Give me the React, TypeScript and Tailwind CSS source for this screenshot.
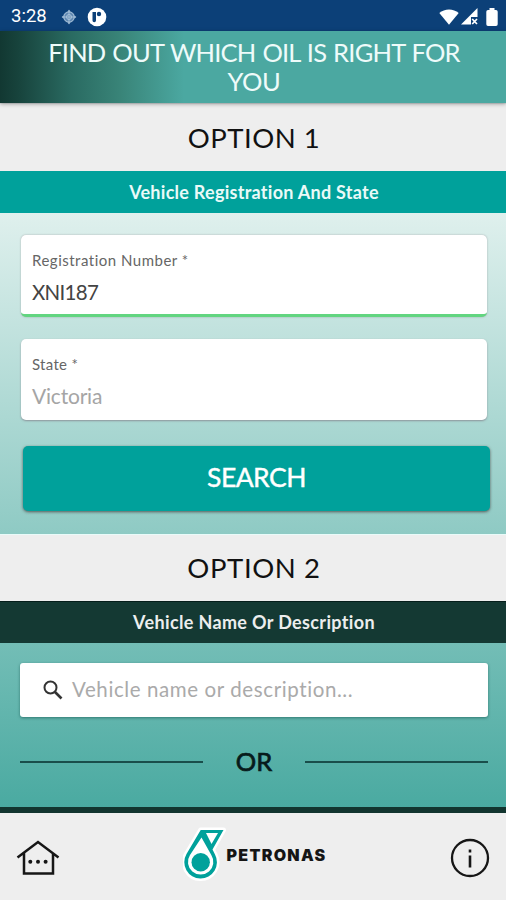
import React from "react";

function StatusBar() {
  return (
    <div className="flex h-[31px] items-center justify-between bg-[#0c4078] pt-[2px] pl-[11px] pr-[8px] text-white">
      <div className="flex items-center">
        <span className="w-[35px] font-['Roboto',sans-serif] text-[18.5px] leading-none">3:28</span>
        <svg className="ml-[15px]" width="16" height="16" viewBox="0 0 16 16" fill="none">
          <path d="M8 .5 11 5l4.500 3-4.500 3L8 15.500 5 11 .5 8 5 5Z" fill="#7c9fc2" />
          <circle cx="8" cy="8" r="5.200" fill="#5d86b0" stroke="#9db9d3" strokeWidth="1.200" />
          <circle cx="8" cy="8" r="2.500" stroke="#a9c3da" />
          <path d="M8 1v14M1 8h14" stroke="#a9c3da" strokeWidth=".9" />
        </svg>
        <svg className="ml-[10px]" width="20" height="20" viewBox="0 0 20 20">
          <circle cx="10" cy="10" r="9.300" fill="#fff" />
          <path d="M5.500 5H9v8.500a1.700 1.700 0 0 1-3.500 0Z" fill="#0c4078" />
          <circle cx="12" cy="7" r="2.200" fill="#0c4078" />
        </svg>
      </div>
      <div className="flex items-center">
        <svg width="20" height="16" viewBox="0 0 20 16">
          <path d="M.3 4C5.500-.8 14.500-.8 19.700 4L10 15.700Z" fill="#fff" />
        </svg>
        <svg className="ml-[2px]" width="17" height="17" viewBox="0 0 17 17">
          <path d="M16.500 0v9H10v7.500H0Z" fill="#fff" />
          <path d="m11.200 11 4.800 5m0-5-4.800 5" stroke="#fff" strokeWidth="1.700" />
        </svg>
        <svg className="ml-[8px]" width="12" height="18" viewBox="0 0 12 18">
          <path d="M3.500 0h5v2H10a1.700 1.700 0 0 1 1.700 1.700v12.600A1.700 1.700 0 0 1 10 18H2a1.700 1.700 0 0 1-1.700-1.700V3.700A1.700 1.700 0 0 1 2 2h1.500Z" fill="#fff" />
        </svg>
      </div>
    </div>
  );
}

function OptionTitle({ children }: { children: React.ReactNode }) {
  return (
    <h2 className="flex h-[67px] items-center justify-center bg-[#eeeeee] pl-[2px] text-[27.5px] leading-none tracking-[0.5px] text-[#111]">
      {children}
    </h2>
  );
}

function PetronasLogo() {
  return (
    <div className="mt-[14px] flex items-center">
      <svg width="44" height="56" viewBox="0 0 44 56">
        <path
          d="M17.700 3H40.500L29.500 22.500 32 27.500A16.300 16.300 0 1 1 3.500 27Z"
          fill="#00a19b"
          stroke="#fff"
          strokeWidth="5"
          strokeLinejoin="round"
        />
        <path d="M17.700 3H40.500L29.500 22.500 32 27.500A16.300 16.300 0 1 1 3.500 27Z" fill="#00a19b" />
        <path d="M23 6H35L28.500 17Z" fill="#fff" />
        <path d="M18.500 10.500 28.300 28A12.700 12.700 0 1 1 7 28Z" fill="#fff" />
        <circle cx="17.700" cy="35.300" r="9.200" fill="#00a19b" />
      </svg>
      <span className="ml-[-1px] font-['Inter',sans-serif] text-[16px] leading-none font-black tracking-[1.3px] text-[#151515]">PETRONAS</span>
    </div>
  );
}

export default function App() {
  return (
    <div className="flex h-[900px] w-[506px] flex-col overflow-hidden font-['Lato',sans-serif]">
      <StatusBar />
      <header className="z-10 flex h-[72px] flex-col items-center bg-[linear-gradient(90deg,#123832_0px,#17433c_18px,#2a6b62_72px,#398478_120px,#4ba8a1_184px,#4ba8a1_100%)] pt-[7px] pl-[2px] text-center text-[25.5px] leading-[29px] text-[#eefbfa] shadow-[0_1px_4px_rgba(0,0,0,0.35)]">
        <div className="whitespace-nowrap tracking-[-0.8px] [word-spacing:1.2px]">FIND OUT WHICH OIL IS RIGHT FOR</div>
        <div className="tracking-[-0.4px]">YOU</div>
      </header>
      <div className="h-px bg-[#dcdfe0]" />
      <OptionTitle>OPTION 1</OptionTitle>
      <div className="flex h-[42px] items-center justify-center bg-[#00a19b] pl-[2px] text-[18px] leading-none font-bold tracking-[0.27px] text-[#eafaf8]">
        Vehicle Registration And State
      </div>
      <main className="flex h-[594px] flex-col bg-[linear-gradient(180deg,#dff0ed,#4aaaa1)]">
        <section className="flex h-[321px] flex-col pt-[22px]">
          <div className="mr-[19px] ml-[21px] flex h-[82px] flex-col rounded-[5px] border-b-[3px] border-[#62d580] bg-white pl-[11px] shadow-[0_0_2px_rgba(90,70,80,0.4)]">
            <label className="mt-[16px] text-[15px] leading-[18px] tracking-[0.5px] text-[#666]">Registration Number *</label>
            <span className="mt-[10px] text-[20.5px] leading-[26px] tracking-[-0.7px] text-[#444]">XNI187</span>
          </div>
          <div className="mt-[22px] mr-[19px] ml-[21px] flex h-[81px] flex-col rounded-[5px] bg-white pl-[11px] shadow-[0_1px_2px_rgba(110,80,100,0.5)]">
            <label className="mt-[16px] text-[15px] leading-[18px] tracking-[0.3px] text-[#666]">State *</label>
            <span className="mt-[10px] text-[21px] leading-[26px] tracking-[-0.2px] text-[#a5a5a5]">Victoria</span>
          </div>
          <button className="mt-[26px] ml-[23px] h-[65px] w-[467px] rounded-[5px] bg-[#00a19b] pb-[3px] text-[26.5px] leading-none tracking-[-0.5px] text-white shadow-[0_1px_3px_rgba(60,40,40,0.7)] [-webkit-text-stroke:0.4px_white]">
            SEARCH
          </button>
        </section>
        <div className="h-[67px] border-t border-[#e9fbf9] bg-[#eeeeee]">
          <h2 className="flex h-[66px] items-center justify-center pl-[2px] text-[27.5px] leading-none tracking-[0.6px] text-[#111]">
            OPTION 2
          </h2>
        </div>
        <div className="z-10 flex h-[42px] items-center justify-center border-t border-[#061e1b] bg-[#143933] pb-[2px] pl-[2px] text-[18px] leading-none font-bold tracking-[0.35px] text-[#eceeee]">
          Vehicle Name Or Description
        </div>
        <section className="px-[20px] pt-[20px]">
          <div className="mr-[-2px] flex h-[54px] items-center rounded-[3px] bg-white pl-[22px] shadow-[0_1px_3px_rgba(20,80,75,0.6)]">
            <svg width="22" height="22" viewBox="0 0 22 22" fill="none" stroke="#333">
              <circle cx="8.500" cy="8.500" r="6" strokeWidth="2" />
              <path d="m13 13 6.500 6.500" strokeWidth="2.600" />
            </svg>
            <span className="ml-[8px] pb-[2px] text-[20.5px] leading-none tracking-[0.6px] text-[#aaa]">Vehicle name or description...</span>
          </div>
          <div className="mr-[-2px] flex h-[90px] items-center">
            <div className="h-[2px] w-[183px] bg-[#194e4b]" />
            <div className="flex w-[102px] justify-center text-[25.5px] leading-none text-[#071b1b] [-webkit-text-stroke:0.7px_#071b1b]">OR</div>
            <div className="h-[2px] w-[183px] bg-[#194e4b]" />
          </div>
        </section>
      </main>
      <footer className="z-10 flex h-[93px] items-start justify-between border-t-[6px] border-[#12352f] bg-[#eeeeee] pr-[16px] pl-[16px]">
        <svg className="mt-[26px]" width="44" height="38" viewBox="0 0 44 38" fill="none" stroke="#161616">
          <path d="M1.500 18.500 22 3l20.500 15.500M8 14v20.500h29V14" strokeWidth="2.500" />
          <g fill="#161616" stroke="none">
            <circle cx="14.300" cy="22.700" r="2" />
            <circle cx="22" cy="22.700" r="2" />
            <circle cx="29.600" cy="22.700" r="2" />
          </g>
        </svg>
        <PetronasLogo />
        <svg className="mt-[25px]" width="40" height="40" viewBox="0 0 40 40" fill="none" stroke="#161616">
          <circle cx="20" cy="20" r="18" strokeWidth="2.300" />
          <path d="M20 17.500V29.500" strokeWidth="2.600" />
          <path d="M20 11.500v3" strokeWidth="2.600" />
        </svg>
      </footer>
    </div>
  );
}
